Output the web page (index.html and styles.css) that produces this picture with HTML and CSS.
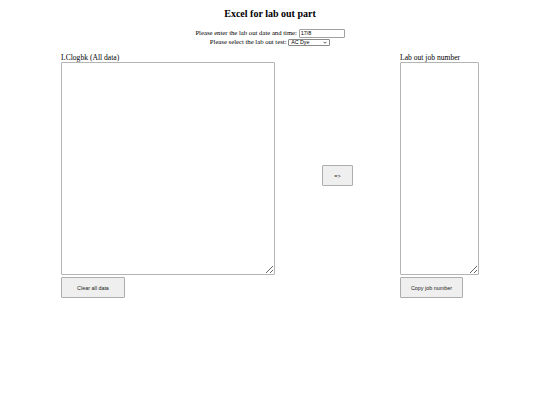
FILE: index.html
```html
<!DOCTYPE html>
<html>
<head>
<meta charset="utf-8">
<link rel="stylesheet" href="styles.css">
</head>
<body>
<main class="page">
  <h1 class="title">Excel for lab out part</h1>
  <div class="form-line">Please enter the lab out date and time: <input class="date-input" type="text" value="17/8"></div>
  <div class="form-line">Please select the lab out test: <span class="select-wrap"><select class="test-select"><option>AC Dye</option></select><svg class="chevron" width="4" height="3" viewBox="0 0 8 6"><path d="M1 1.5 L4 4.5 L7 1.5" fill="none" stroke="#333" stroke-width="1.6"/></svg></span></div>
  <div class="workspace">
    <div class="column column-left">
      <label class="area-label">LClogbk (All data)</label>
      <textarea class="data-area"></textarea>
      <button class="action clear-btn">Clear all data</button>
    </div>
    <button class="action transfer-btn">=&gt;</button>
    <div class="column column-right">
      <label class="area-label">Lab out job number</label>
      <textarea class="data-area"></textarea>
      <button class="action copy-btn">Copy job number</button>
    </div>
  </div>
</main>
</body>
</html>
```
FILE: styles.css
```css
html, body {
  margin: 0;
  padding: 0;
  background: #ffffff;
}
body {
  font-family: "Liberation Serif", "Times New Roman", serif;
  color: #000;
}
.page {
  width: 540px;
  text-align: center;
}
.title {
  margin: 7px 0 0;
  font-size: 10px;
  line-height: 13px;
  height: 13px;
  font-weight: bold;
}
.form-line {
  font-size: 6.7px;
  line-height: 9px;
  height: 9px;
  white-space: nowrap;
}
.title + .form-line {
  margin-top: 8px;
}
.date-input {
  box-sizing: border-box;
  width: 46px;
  height: 9px;
  padding: 0 1px;
  margin: 0;
  border: 1px solid #a0a0a0;
  border-radius: 1px;
  font-family: "Liberation Sans", Arial, sans-serif;
  font-size: 5.5px;
  vertical-align: middle;
}
.select-wrap {
  position: relative;
  display: inline-block;
  vertical-align: middle;
  line-height: 0;
}
.test-select {
  -webkit-appearance: none;
  appearance: none;
  box-sizing: border-box;
  width: 42px;
  height: 7px;
  padding: 0 0 0 2px;
  margin: 0;
  background: #fff;
  border: 1px solid #8a8a8a;
  border-radius: 1px;
  font-family: "Liberation Sans", Arial, sans-serif;
  font-size: 5.3px;
  line-height: 5px;
  color: #000;
}
.chevron {
  position: absolute;
  right: 3px;
  top: 2px;
}
.workspace {
  display: flex;
  justify-content: center;
  align-items: center;
  gap: 47px;
  margin-top: 7px;
  text-align: left;
}
.column {
  display: flex;
  flex-direction: column;
  align-items: flex-start;
}
.column-left { width: 214px; }
.column-right { width: 79px; }
.area-label {
  display: block;
  font-size: 7.6px;
  line-height: 9px;
  height: 9px;
}
.data-area {
  box-sizing: border-box;
  width: 100%;
  height: 213px;
  margin: 0;
  padding: 1px;
  border: 1px solid #b4b4b4;
  border-radius: 1px;
  font-size: 6px;
}
.action {
  box-sizing: border-box;
  height: 21px;
  margin: 2px 0 0;
  padding: 0;
  background: #efefef;
  border: 1px solid #adadad;
  border-radius: 1px;
  font-family: "Liberation Sans", Arial, sans-serif;
  font-size: 5.4px;
  color: #222;
}
.clear-btn { width: 64px; }
.copy-btn { width: 63px; }
.transfer-btn {
  width: 31px;
  margin: 0;
}
```
